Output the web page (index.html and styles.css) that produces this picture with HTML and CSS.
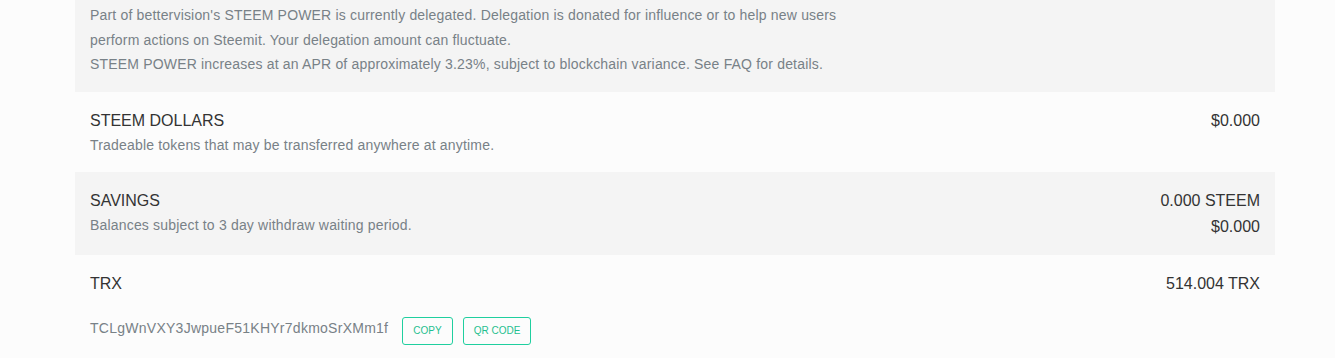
FILE: index.html
```html
<!DOCTYPE html>
<html lang="en">
<head>
<meta charset="utf-8">
<title>Wallet</title>
<link rel="stylesheet" href="styles.css">
</head>
<body>
<div class="wallet">
  <div class="balance zebra first">
    <div class="col-left">
      <div class="secondary tall">Part of bettervision's STEEM POWER is currently delegated. Delegation is donated for influence or to help new users perform actions on Steemit. Your delegation amount can fluctuate.</div>
      <div class="secondary tall">STEEM POWER increases at an APR of approximately 3.23%, subject to blockchain variance. See FAQ for details.</div>
    </div>
    <div class="col-right"></div>
  </div>

  <div class="balance">
    <div class="col-left">
      <div class="title">STEEM DOLLARS</div>
      <div class="secondary">Tradeable tokens that may be transferred anywhere at anytime.</div>
    </div>
    <div class="col-right">
      <div class="value">$0.000</div>
    </div>
  </div>

  <div class="balance zebra">
    <div class="col-left">
      <div class="title">SAVINGS</div>
      <div class="secondary">Balances subject to 3 day withdraw waiting period.</div>
    </div>
    <div class="col-right">
      <div class="value">0.000 STEEM</div>
      <div class="value">$0.000</div>
    </div>
  </div>

  <div class="balance">
    <div class="col-left">
      <div class="title">TRX</div>
      <div class="address-row">
        <span class="address">TCLgWnVXY3JwpueF51KHYr7dkmoSrXMm1f</span>
        <button class="btn-hollow">COPY</button>
        <button class="btn-hollow">QR CODE</button>
      </div>
    </div>
    <div class="col-right">
      <div class="value">514.004 TRX</div>
    </div>
  </div>
</div>
</body>
</html>
```

FILE: styles.css
```css
html, body {
  margin: 0;
  padding: 0;
  background: #fcfcfc;
}

body {
  font-family: "Liberation Sans", Arial, sans-serif;
  color: #333333;
  overflow: hidden;
}

.wallet {
  width: 1200px;
  margin-left: 75px;
}

.balance {
  display: flex;
  padding: 16px 0;
}

.balance.zebra {
  background: #f4f4f4;
}

.balance.first {
  padding-top: 3px;
  padding-bottom: 15.5px;
}

.col-left {
  box-sizing: border-box;
  width: 800px;
  padding: 0 15px;
}

.col-right {
  box-sizing: border-box;
  width: 400px;
  padding: 0 15px;
  text-align: right;
}

.title,
.value {
  font-size: 16px;
  line-height: 25.6px;
  color: #333333;
}

.secondary {
  font-size: 14px;
  line-height: 22.4px;
  color: #788187;
  letter-spacing: 0.18px;
}

.secondary.tall {
  line-height: 24.5px;
}

.address-row {
  display: flex;
  align-items: center;
  gap: 10px;
  margin-top: 20px;
}

.address {
  font-size: 14px;
  line-height: 22.4px;
  color: #788187;
  letter-spacing: 0.26px;
  margin-right: 4px;
  padding-bottom: 5px;
}

.btn-hollow {
  box-sizing: border-box;
  height: 28px;
  padding: 0 10px;
  margin: 0;
  background: transparent;
  border: 1px solid #1fcf9f;
  border-radius: 3px;
  color: #1fbf8f;
  font-family: "Liberation Sans", Arial, sans-serif;
  font-size: 10px;
  line-height: 26px;
  cursor: pointer;
}
```
